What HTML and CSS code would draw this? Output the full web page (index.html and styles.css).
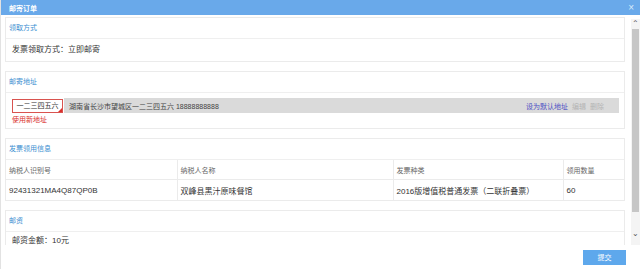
FILE: index.html
```html
<!DOCTYPE html>
<html lang="zh-CN">
<head>
  <meta charset="UTF-8">
  <meta name="viewport" content="width=device-width, initial-scale=1.0">
  <title>邮寄订单</title>
  <link rel="stylesheet" href="styles.css">
</head>
<body>
  <div class="dialog">
    <div class="title-bar">
      <span class="title">邮寄订单</span>
      <span class="close">×</span>
    </div>

    <div class="main">
      <div class="content">
        <div class="panel">
          <div class="panel-title">领取方式</div>
          <div class="panel-body text-row">发票领取方式：立即邮寄</div>
        </div>

        <div class="panel">
          <div class="panel-title">邮寄地址</div>
          <div class="panel-body address-body">
            <div class="address-row">
              <div class="receiver">一二三四五六</div>
              <div class="address-bar">
                <span class="address-text">湖南省长沙市望城区一二三四五六 18888888888</span>
                <span class="address-actions">
                  <a class="link-default">设为默认地址</a>
                  <a class="link-muted">编辑</a>
                  <a class="link-muted">删除</a>
                </span>
              </div>
            </div>
            <a class="new-address">使用新地址</a>
          </div>
        </div>

        <div class="panel">
          <div class="panel-title">发票领用信息</div>
          <table class="info-table">
            <colgroup>
              <col class="col-tax">
              <col class="col-name">
              <col class="col-kind">
              <col class="col-count">
            </colgroup>
            <thead>
              <tr>
                <th>纳税人识别号</th>
                <th>纳税人名称</th>
                <th>发票种类</th>
                <th>领用数量</th>
              </tr>
            </thead>
            <tbody>
              <tr>
                <td>92431321MA4Q87QP0B</td>
                <td>双峰县黑汁原味餐馆</td>
                <td>2016版增值税普通发票（二联折叠票）</td>
                <td>60</td>
              </tr>
            </tbody>
          </table>
        </div>

        <div class="panel">
          <div class="panel-title">邮资</div>
          <div class="panel-body postage-row">邮资金额：10元</div>
        </div>
      </div>

      <div class="scrollbar">
        <span class="scroll-arrow">⌃</span>
        <div class="scroll-thumb"></div>
        <span class="scroll-arrow">⌄</span>
      </div>
    </div>

    <div class="footer">
      <button class="submit">提交</button>
    </div>
  </div>
</body>
</html>
```

FILE: styles.css
```css
body {
  margin: 0;
  background-color: #fff;
  font-family: "Liberation Sans", "Noto Sans CJK SC", sans-serif;
  color: #333;
}

.dialog {
  width: 640px;
  height: 269px;
  display: flex;
  flex-direction: column;
  box-sizing: border-box;
  border-left: 1px solid #e2e2e2;
  overflow: hidden;
}

.title-bar {
  height: 15px;
  flex-shrink: 0;
  display: flex;
  align-items: center;
  justify-content: space-between;
  padding: 0 6px 0 8px;
  background-color: #69a9ea;
}

.title {
  font-size: 7px;
  font-weight: bold;
  color: #fff;
}

.close {
  font-size: 10px;
  line-height: 15px;
  color: #d8e9fa;
}

.main {
  height: 230px;
  display: flex;
  overflow: hidden;
}

.content {
  flex: 1;
  padding: 2px 6px 0 4px;
  overflow: hidden;
}

.panel {
  border: 1px solid #ebebeb;
  margin-bottom: 9px;
}

.panel-title {
  height: 20px;
  line-height: 20px;
  padding-left: 3px;
  font-size: 7px;
  color: #3d8fd1;
  border-bottom: 1px solid #efefef;
}

.text-row {
  height: 22px;
  line-height: 22px;
  padding-left: 6px;
  font-size: 8px;
  color: #333;
}

.postage-row {
  height: 18px;
  line-height: 18px;
  padding-left: 6px;
  font-size: 8px;
  color: #333;
}

.address-body {
  padding: 5px 5px 2px 6px;
}

.address-row {
  display: flex;
  align-items: center;
}

.receiver {
  width: 49px;
  height: 12px;
  line-height: 12px;
  border: 1px solid #d9534f;
  text-align: center;
  font-size: 7px;
  color: #333;
  background-color: #fff;
  position: relative;
}

.receiver::after {
  content: "";
  position: absolute;
  right: 0;
  bottom: 0;
  border-style: solid;
  border-width: 0 0 4px 4px;
  border-color: transparent transparent #d9302c transparent;
}

.address-bar {
  flex: 1;
  height: 15px;
  margin-left: 1px;
  display: flex;
  align-items: center;
  justify-content: space-between;
  padding: 0 15px 0 5px;
  background-color: #dadada;
  font-size: 7px;
}

.address-text {
  color: #444;
}

.address-actions a {
  margin-left: 2px;
}

.link-default {
  color: #4d4fc4;
}

.link-muted {
  color: #b4b4b4;
}

.new-address {
  display: block;
  height: 13px;
  line-height: 13px;
  font-size: 7px;
  color: #d9302c;
}

.info-table {
  width: 100%;
  table-layout: fixed;
  border-collapse: collapse;
  font-size: 8px;
}

.col-tax {
  width: 171px;
}

.col-name {
  width: 216px;
}

.col-kind {
  width: 170px;
}

.info-table th,
.info-table td {
  text-align: left;
  padding: 0 3px;
  border-right: 1px solid #ebebeb;
  white-space: nowrap;
  overflow: hidden;
}

.info-table th:last-child,
.info-table td:last-child {
  border-right: none;
}

.info-table th {
  height: 19px;
  font-size: 7px;
  font-weight: normal;
  color: #666;
  border-bottom: 1px solid #ebebeb;
}

.info-table td {
  height: 20px;
  color: #333;
}

.scrollbar {
  width: 9px;
  margin-top: 4px;
  display: flex;
  flex-direction: column;
  align-items: center;
  background-color: #f4f4f4;
}

.scroll-arrow {
  height: 10px;
  line-height: 10px;
  font-size: 8px;
  color: #555;
}

.scroll-thumb {
  width: 7px;
  height: 183px;
  margin-bottom: 17px;
  background-color: #c6c6c6;
}

.footer {
  flex: 1;
  display: flex;
  justify-content: flex-end;
  align-items: center;
  padding-right: 14px;
}

.submit {
  width: 43px;
  height: 15px;
  padding: 0;
  border: none;
  background-color: #5ea8ec;
  color: #fff;
  font-family: "Noto Sans CJK SC", sans-serif;
  font-size: 7px;
}
```
